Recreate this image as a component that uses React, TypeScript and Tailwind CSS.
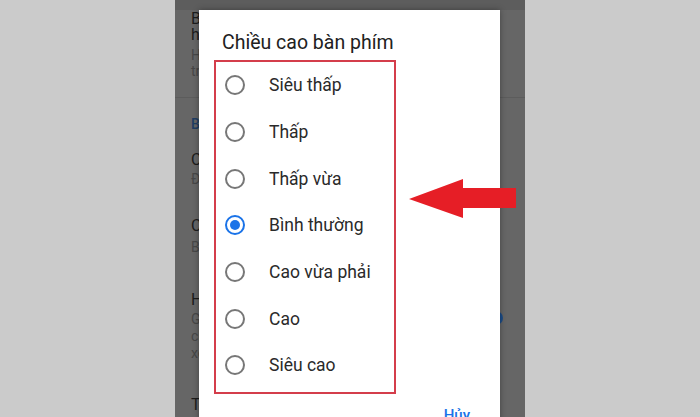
import React from "react";

const options = [
  "Siêu thấp",
  "Thấp",
  "Thấp vừa",
  "Bình thường",
  "Cao vừa phải",
  "Cao",
  "Siêu cao",
];

function Radio({ checked }: { checked: boolean }) {
  return (
    <svg width="22" height="22" viewBox="0 0 22 22" className="shrink-0">
      <circle
        cx="11"
        cy="11"
        r="9"
        fill="none"
        stroke={checked ? "#1a73e8" : "#777777"}
        strokeWidth="2"
      />
      {checked && <circle cx="11" cy="11" r="5" fill="#1a73e8" />}
    </svg>
  );
}

export default function App() {
  return (
    <div
      className="relative w-[700px] h-[417px] overflow-hidden bg-[#cbcbcb]"
      style={{ fontFamily: "Roboto, 'Noto Sans', sans-serif" }}
    >
      <div className="relative ml-[175px] w-[350px] h-[417px] bg-[#666666] overflow-hidden">
        {/* dimmed settings list behind the dialog */}
        <div className="h-[10px] bg-[#5d5d5d]" />
        <div className="pl-[16px] pr-[20px] flex flex-col">
          <div className="pt-[0px] pb-[18px]">
            <div className="text-[16px] leading-[16px] text-[#1c1c1c] whitespace-nowrap pt-[1px]">Bật hàng phím số</div>
            <div className="text-[16px] leading-[16px] text-[#1c1c1c] whitespace-nowrap">hiển thị</div>
            <div className="text-[14px] leading-[16px] text-[#474747] whitespace-nowrap mt-[4px]">Hiển thị hàng số phía</div>
            <div className="text-[14px] leading-[16px] text-[#474747] whitespace-nowrap">trên cùng bàn phím</div>
          </div>
        </div>
        <div className="h-px bg-[#5c5c5c]" />
        <div className="pl-[16px] pr-[20px] flex flex-col">
          <div className="text-[14px] leading-[16px] text-[#1f3d63] font-medium whitespace-nowrap mt-[18px]">Bố cục</div>
          <div className="mt-[19px]">
            <div className="text-[16px] leading-[18px] text-[#1c1c1c] whitespace-nowrap">Chế độ một tay</div>
            <div className="text-[14px] leading-[16px] text-[#474747] whitespace-nowrap mt-[2px]">Đã tắt</div>
          </div>
          <div className="mt-[30px]">
            <div className="text-[16px] leading-[18px] text-[#1c1c1c] whitespace-nowrap">Chiều cao bàn phím</div>
            <div className="text-[14px] leading-[16px] text-[#474747] whitespace-nowrap mt-[4px]">Bình thường</div>
          </div>
          <div className="mt-[36px] flex items-start justify-between">
            <div>
              <div className="text-[16px] leading-[18px] text-[#1c1c1c] whitespace-nowrap">Hiển thị phím chuyển</div>
              <div className="text-[14px] leading-[17px] text-[#474747] whitespace-nowrap mt-[2px]">Gợi ý</div>
              <div className="text-[14px] leading-[17px] text-[#474747] whitespace-nowrap">chuyển</div>
              <div className="text-[14px] leading-[17px] text-[#474747] whitespace-nowrap">xem</div>
            </div>
            <div className="mt-[20px] mr-[2px] w-[14px] h-[14px] rounded-full bg-[#1c4c87]" />
          </div>
          <div className="mt-[34px] text-[16px] leading-[18px] text-[#1c1c1c] whitespace-nowrap">Theme</div>
        </div>

        {/* dialog */}
        <div className="absolute left-[24px] top-[10px] w-[301px] h-[440px] bg-white shadow-[0_0_6px_rgba(0,0,0,0.35)]">
          <div className="pl-[23px] pt-[21px] text-[19.5px] leading-[24px] text-[#212121] whitespace-nowrap">
            Chiều cao bàn phím
          </div>
          <div className="ml-[15px] mt-[5px] w-[182px] border-2 border-[#d43d4b] pb-[3px]">
            {options.map((o) => (
              <div key={o} className="h-[46.7px] flex items-center pl-[8px]">
                <Radio checked={o === "Bình thường"} />
                <span className="ml-[23px] text-[17.5px] text-[#2a2a2a] whitespace-nowrap">{o}</span>
              </div>
            ))}
          </div>
          <div className="flex justify-end pr-[30px] mt-[11px]">
            <span className="text-[15px] leading-[20px] font-medium text-[#1a73e8]">Hủy</span>
          </div>
        </div>
      </div>

      {/* red arrow annotation */}
      <svg className="absolute left-0 top-0" width="700" height="417" viewBox="0 0 700 417">
        <polygon
          points="409,199 463,179 463,188 516,188 516,208 463,208 463,218"
          fill="#e61e26"
        />
      </svg>
    </div>
  );
}
